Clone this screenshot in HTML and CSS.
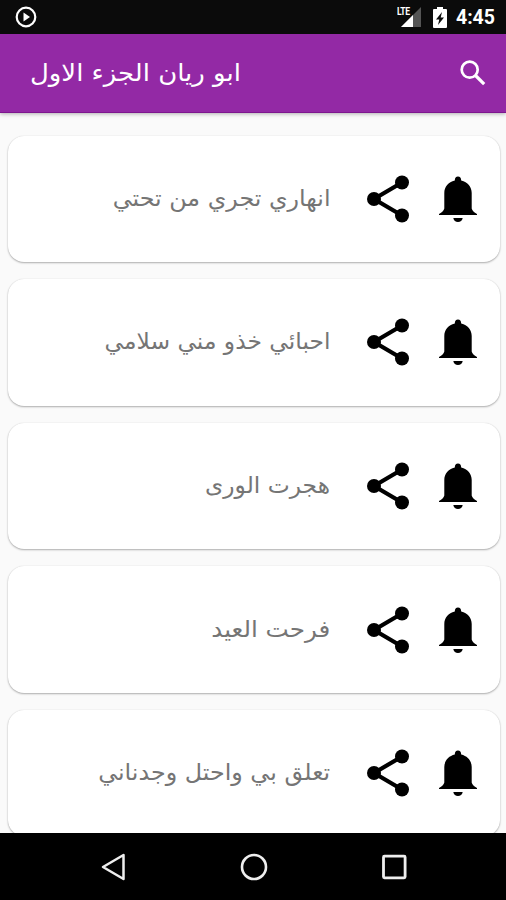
FILE: index.html
```html
<!DOCTYPE html>
<html lang="ar">
<head>
<meta charset="utf-8">
<title>ابو ريان الجزء الاول</title>
<link rel="stylesheet" href="styles.css">
</head>
<body>
<svg class="defs" aria-hidden="true">
  <symbol id="share" viewBox="0 0 44 48">
    <path d="M36 7.500 8 24 36 40.500" fill="none" stroke="#000" stroke-width="4.200"/>
    <circle cx="36" cy="7.500" r="7"/><circle cx="8" cy="24" r="7"/><circle cx="36" cy="40.500" r="7"/>
  </symbol>
  <symbol id="bell" viewBox="0 0 38 48">
    <path d="M19 1.500c-2 0-3.200 1.500-3.200 4.100C9.300 7.200 5.300 12 5.300 18v15.500Q4.500 36.500 0 39v1h38v-1q-4.500-2.500-5.300-5.500V18c0-6-4-10.800-10.500-12.400 0-2.600-1.200-4.100-3.200-4.100zM14.300 43h9.400c-.4 2.600-2.300 4-4.700 4s-4.300-1.400-4.700-4z"/>
  </symbol>
</svg>
<div class="screen">
  <header class="status">
    <svg class="play" viewBox="0 0 22 22"><circle cx="11" cy="11" r="9.300" fill="none" stroke="#fff" stroke-width="2.200"/><path d="M8.500 6.500v9l6.500-4.500z" fill="#fff"/></svg>
    <div class="signal">
      <svg viewBox="0 0 26 20"><path d="M25 0v20H5z" fill="#555"/><path d="M17 8v12H5z" fill="#fff"/></svg>
      <span class="lte">LTE</span>
    </div>
    <svg class="battery" viewBox="0 0 14 21"><path d="M4 0h6v2h3q1 0 1 1v17q0 1-1 1H1q-1 0-1-1V3q0-1 1-1h3z" fill="#fff"/><path d="M9 5 3 12.500h3.300L5 18l6-7.500H7.700z" fill="#0b0b0b"/></svg>
    <span class="clock">4:45</span>
  </header>
  <div class="appbar">
    <h1 class="title" dir="rtl"><span class="fit">ابو ريان الجزء الاول</span></h1>
    <svg class="search" viewBox="0 0 26 26"><circle cx="9.700" cy="9.700" r="8" fill="none" stroke="#fff" stroke-width="2.700"/><path d="m15.500 15.500 8.700 8.700" stroke="#fff" stroke-width="3.200"/></svg>
  </div>
  <main class="list">
    <article class="card"><p class="name" dir="rtl"><span class="fit stretch-a">انهاري تجري من تحتي</span></p><svg class="share"><use href="#share"/></svg><svg class="bell"><use href="#bell"/></svg></article>
    <article class="card"><p class="name" dir="rtl"><span class="fit stretch-b">احبائي خذو مني سلامي</span></p><svg class="share"><use href="#share"/></svg><svg class="bell"><use href="#bell"/></svg></article>
    <article class="card"><p class="name" dir="rtl"><span class="fit stretch-b">هجرت الورى</span></p><svg class="share"><use href="#share"/></svg><svg class="bell"><use href="#bell"/></svg></article>
    <article class="card"><p class="name" dir="rtl"><span class="fit stretch-c">فرحت العيد</span></p><svg class="share"><use href="#share"/></svg><svg class="bell"><use href="#bell"/></svg></article>
    <article class="card"><p class="name" dir="rtl"><span class="fit stretch-a">تعلق بي واحتل وجدناني</span></p><svg class="share"><use href="#share"/></svg><svg class="bell"><use href="#bell"/></svg></article>
  </main>
  <nav class="navbar">
    <svg viewBox="0 0 28 28"><path d="M24.500 2v24L4 14z" fill="none" stroke="#eee" stroke-width="2.500" stroke-linejoin="round"/></svg>
    <svg viewBox="0 0 28 28"><circle cx="14" cy="14" r="12" fill="none" stroke="#eee" stroke-width="2.600"/></svg>
    <svg viewBox="0 0 28 28"><rect x="3.500" y="3.200" width="21.600" height="21.600" rx="1" fill="none" stroke="#eee" stroke-width="2.800"/></svg>
  </nav>
</div>
</body>
</html>
```
FILE: styles.css
```css
* { box-sizing: border-box; }
body { margin: 0; background: #000; font-family: "DejaVu Sans", sans-serif; }
.defs { display: none; }
.screen { width: 506px; height: 900px; display: flex; flex-direction: column; overflow: hidden; }
.status { height: 34px; flex: none; display: flex; align-items: center; padding: 0 11px 0 15px; background: #0b0b0b; color: #fff; }
.play { width: 22px; height: 22px; margin-right: auto; }
.signal { position: relative; width: 26px; height: 20px; }
.signal svg { display: block; width: 26px; height: 20px; }
.lte { position: absolute; left: 1px; top: 0; padding-right: 1px; background: #0b0b0b; font: 700 11px/10px Roboto, sans-serif; letter-spacing: -0.5px; transform: scaleX(.78); transform-origin: left; }
.battery { width: 14px; height: 21px; margin-left: 11px; }
.clock { margin: 1px 0 0 9px; font: 700 19.500px/34px Roboto, sans-serif; }
.appbar { height: 79px; flex: none; display: flex; align-items: center; justify-content: space-between; padding: 0 20px 0 30px; background: #9329a5; border-bottom: 1px solid #7e168f; box-shadow: 0 1px 4px rgba(0,0,0,.3); z-index: 1; }
.title { margin: 0; color: #fff; font-size: 24px; font-weight: 400; line-height: 40px; }
.title .fit { transform: scaleX(1.080); transform-origin: left; }
.search { width: 26px; height: 26px; }
.list { flex: 1; min-height: 0; overflow: hidden; display: flex; flex-direction: column; gap: 17px; padding: 22.500px 6.500px 0 8px; background: #fafafa; }
.card { height: 126.600px; flex: none; display: flex; align-items: center; padding-right: 23px; background: #fff; border-radius: 16px; box-shadow: 0 1px 2px rgba(0,0,0,.3), 0 0 1px rgba(0,0,0,.15); }
.name { flex: 1; margin: 0 35px 2px 0; color: #757575; font-size: 23px; line-height: 36px; white-space: nowrap; }
.fit { display: inline-block; white-space: nowrap; transform-origin: right; }
.stretch-a { transform: scaleX(1.035); }
.stretch-b { transform: scaleX(1.016); }
.stretch-c { transform: scaleX(1.070); }
.share { width: 44px; height: 48px; margin-right: 29px; }
.bell { width: 38px; height: 48px; }
.navbar { height: 67px; flex: none; display: flex; align-items: center; justify-content: space-between; padding: 0 98px 0 99px; background: #000; }
.navbar svg { width: 28px; height: 28px; }
```
